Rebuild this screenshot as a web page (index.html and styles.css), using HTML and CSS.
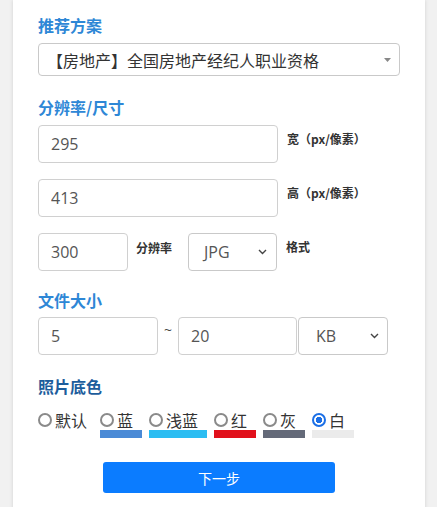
FILE: index.html
```html
<!DOCTYPE html>
<html lang="zh-CN">
<head>
<meta charset="utf-8">
<title>证件照规格</title>
<link rel="stylesheet" href="styles.css">
</head>
<body>
<div class="card">
  <h3 class="heading">推荐方案</h3>
  <div class="select select-wide">
    <span class="select-text">【房地产】全国房地产经纪人职业资格</span>
    <svg class="tri" width="7" height="4" viewBox="0 0 7 4"><polygon points="0,0 7,0 3.5,4" fill="#888"/></svg>
  </div>

  <h3 class="heading">分辨率/尺寸</h3>
  <div class="row">
    <input class="input w-long" type="text" value="295">
    <span class="side-label">宽（px/像素）</span>
  </div>
  <div class="row">
    <input class="input w-long" type="text" value="413">
    <span class="side-label">高（px/像素）</span>
  </div>
  <div class="row row-last">
    <input class="input w-short" type="text" value="300">
    <span class="side-label mid-label">分辨率</span>
    <div class="select select-small">
      <span class="select-text">JPG</span>
      <svg class="chev" width="9" height="6" viewBox="0 0 9 6"><polyline points="1,1 4.5,4.5 8,1" fill="none" stroke="#444" stroke-width="1.4"/></svg>
    </div>
    <span class="side-label">格式</span>
  </div>

  <h3 class="heading heading-size">文件大小</h3>
  <div class="row size-row">
    <input class="input w-size" type="text" value="5">
    <span class="tilde">~</span>
    <input class="input w-size2" type="text" value="20">
    <div class="select select-unit">
      <span class="select-text">KB</span>
      <svg class="chev" width="9" height="6" viewBox="0 0 9 6"><polyline points="1,1 4.5,4.5 8,1" fill="none" stroke="#444" stroke-width="1.4"/></svg>
    </div>
  </div>

  <h3 class="heading heading-dark">照片底色</h3>
  <div class="colors">
    <label class="opt opt-default"><span class="opt-line"><input type="radio" name="bg" class="radio"><span>默认</span></span></label>
    <label class="opt"><span class="opt-line"><input type="radio" name="bg" class="radio"><span>蓝</span></span><span class="swatch sw-blue"></span></label>
    <label class="opt"><span class="opt-line"><input type="radio" name="bg" class="radio"><span>浅蓝</span></span><span class="swatch sw-light"></span></label>
    <label class="opt"><span class="opt-line"><input type="radio" name="bg" class="radio"><span>红</span></span><span class="swatch sw-red"></span></label>
    <label class="opt"><span class="opt-line"><input type="radio" name="bg" class="radio"><span>灰</span></span><span class="swatch sw-gray"></span></label>
    <label class="opt"><span class="opt-line"><input type="radio" name="bg" class="radio" checked><span>白</span></span><span class="swatch sw-white"></span></label>
  </div>

  <div class="actions">
    <button class="btn" type="button">下一步</button>
  </div>
</div>
</body>
</html>
```
FILE: styles.css
```css
* { box-sizing: border-box; }
html, body {
  margin: 0;
  padding: 0;
  background: #f1f1f1;
  height: 100%;
}
body {
  font-family: "Open Sans", "Noto Sans CJK SC", sans-serif;
  color: #333;
}
.card {
  margin-left: 13px;
  width: 412px;
  min-height: 100%;
  background: #fff;
  box-shadow: 0 0 4px rgba(0, 0, 0, 0.13);
  padding: 14px 25px 20px 25px;
}
.heading {
  margin: 0 0 7px 0;
  font-family: "Noto Sans CJK SC", sans-serif;
  font-size: 16px;
  line-height: 22px;
  font-weight: bold;
  color: #2e87d6;
}
.heading-size { margin-bottom: 6px; }
.heading-dark { color: #1d5d9c; margin-bottom: 12px; }

.select {
  display: flex;
  align-items: center;
  justify-content: space-between;
  border: 1px solid #c9c9c9;
  border-radius: 4px;
  background: #fff;
  color: #444;
}
.select-wide {
  height: 33px;
  padding: 0 8px 0 8px;
  margin-bottom: 20px;
}
.select-wide .select-text {
  font-family: "Noto Sans CJK SC", sans-serif;
  font-size: 16px;
  color: #333;
}
.select-small, .select-unit {
  height: 38px;
  font-size: 16px;
  color: #555;
}
.select-small { width: 89px; padding: 0 9px 0 15px; }
.select-unit { width: 90px; padding: 0 8px 0 17px; margin-left: 1px; }

.row {
  display: flex;
  align-items: flex-start;
  margin-bottom: 16px;
}
.row-last { margin-bottom: 18px; }
.input {
  height: 38px;
  border: 1px solid #d0d0d0;
  border-radius: 4px;
  padding: 0 12px;
  font-family: "Open Sans", sans-serif;
  font-size: 16px;
  color: #555;
  background: #fff;
  outline: none;
}
.w-long { width: 240px; }
.w-short { width: 90px; }
.w-size { width: 120px; }
.w-size2 { width: 119px; }
.side-label {
  font-family: "Noto Sans CJK SC", sans-serif;
  font-size: 12px;
  font-weight: bold;
  line-height: 16px;
  color: #333;
  margin-left: 9px;
  padding-top: 6px;
}
.mid-label {
  margin-left: 8px;
  margin-right: 16px;
  padding-top: 7px;
}
.size-row { margin-bottom: 20px; }
.tilde {
  width: 20px;
  text-align: center;
  font-size: 14px;
  line-height: 14px;
  padding-top: 6px;
  color: #444;
}

.colors {
  display: flex;
  gap: 7px;
  align-items: flex-start;
}
.opt {
  display: flex;
  flex-direction: column;
  cursor: pointer;
}
.opt-line {
  display: flex;
  align-items: center;
  height: 21px;
  padding-right: 9px;
  font-family: "Noto Sans CJK SC", sans-serif;
  font-size: 16px;
  color: #333;
}
.opt-default .opt-line { padding-right: 6px; }
.radio {
  appearance: none;
  -webkit-appearance: none;
  width: 14px;
  height: 14px;
  margin: 1px 3px 0 0;
  border: 2px solid #8a8a8a;
  border-radius: 50%;
  background: #fff;
  flex: none;
}
.radio:checked {
  border-color: #1b6fe6;
  background: radial-gradient(circle, #1b6fe6 0 3px, #fff 3.5px);
}
.swatch {
  display: block;
  height: 8px;
  width: 100%;
}
.sw-blue { background: #4a8ad6; }
.sw-light { background: #2bbdf2; }
.sw-red { background: #e1101b; }
.sw-gray { background: #646a79; }
.sw-white { background: #ebebeb; }

.actions {
  display: flex;
  justify-content: center;
  margin-top: 24px;
}
.btn {
  width: 232px;
  height: 31px;
  border: none;
  border-radius: 3px;
  background: #0b7cff;
  color: #fff;
  font-family: "Noto Sans CJK SC", sans-serif;
  font-size: 14px;
}
```
